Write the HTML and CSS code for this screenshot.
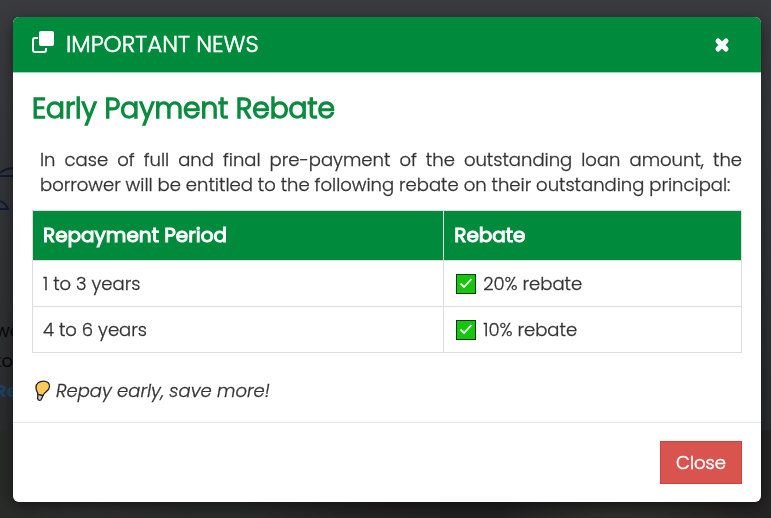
FILE: index.html
```html
<!DOCTYPE html>
<html lang="en">
<head>
  <meta charset="UTF-8"/>
  <meta name="viewport" content="width=device-width, initial-scale=1.0"/>
  <title>Important News</title>
  <link rel="stylesheet" href="styles.css">
</head>
<body>
<main class="page">
  <svg class="page-art" width="40" height="56" viewBox="0 0 40 56" fill="none" stroke="#111b30" stroke-width="2">
    <path d="M0 9C4 5 9 4 20 4M0 12H20M0 37C4 39 7 42 8 45H0"/>
  </svg>
  <p class="page-text">we<br>to<br><a href="#">Re</a></p>
  <div class="page-photo"></div>
</main>

<div class="modal-backdrop">
  <div class="modal" role="dialog" aria-labelledby="modalTitle">
    <div class="modal-header">
      <svg class="title-icon" width="24" height="24" viewBox="0 0 24 24">
        <path d="M7 8H4Q2 8 2 10V20Q2 22 4 22H13Q15 22 15 20V18" fill="none" stroke="#fff" stroke-width="2"/>
        <rect x="8" y="1" width="15" height="15" rx="2" fill="#fff"/>
      </svg>
      <h4 id="modalTitle" class="modal-title">IMPORTANT NEWS</h4>
      <button type="button" class="close-icon" aria-label="Close" onclick="closeModal()">
        <svg width="16" height="16" viewBox="0 0 16 16">
          <path d="M4 4L12 12M12 4L4 12" stroke="#fff" stroke-width="5" stroke-linecap="round"/>
        </svg>
      </button>
    </div>

    <div class="modal-body">
      <h2>Early Payment Rebate</h2>
      <p class="intro">In case of full and final pre-payment of the outstanding loan amount, the borrower will be entitled to the following rebate on their outstanding principal:</p>

      <table>
        <thead>
        <tr>
          <th>Repayment Period</th>
          <th>Rebate</th>
        </tr>
        </thead>
        <tbody>
        <tr>
          <td>1 to 3 years</td>
          <td>
            <svg class="check" width="20" height="20" viewBox="0 0 20 20">
              <rect x="0.500" y="0.500" width="19" height="19" fill="#16c60c" stroke="#10380d"/>
              <path d="M4.500 9.500L8 13L15.500 5" fill="none" stroke="#fff" stroke-width="1.800"/>
            </svg>
            20% rebate
          </td>
        </tr>
        <tr>
          <td>4 to 6 years</td>
          <td>
            <svg class="check" width="20" height="20" viewBox="0 0 20 20">
              <rect x="0.500" y="0.500" width="19" height="19" fill="#16c60c" stroke="#10380d"/>
              <path d="M4.500 9.500L8 13L15.500 5" fill="none" stroke="#fff" stroke-width="1.800"/>
            </svg>
            10% rebate
          </td>
        </tr>
        </tbody>
      </table>

      <p class="note">
        <svg class="bulb" width="16" height="22" viewBox="0 0 16 22">
          <path d="M3 14L2.500 18.500Q3.500 21 6 20L8 15.500Z" fill="#ccc" stroke="#222" stroke-width="1.300"/>
          <path d="M3 14.500C2.500 11.500 1 11 1 7.500C1 3.500 4.500 1.200 8.500 1.200C12.500 1.200 15 3.600 14.500 7C14 11 9.500 12 8 15.500Z" fill="#ffc95c" stroke="#222" stroke-width="1.300"/>
        </svg>
        <em>Repay early, save more!</em>
      </p>
    </div>

    <div class="modal-footer">
      <button type="button" class="btn-close" onclick="closeModal()">Close</button>
    </div>
  </div>
</div>

<script>
  function closeModal() {
    document.querySelector('.modal-backdrop').style.display = 'none';
  }
</script>
</body>
</html>
```

FILE: styles.css
```css
body {
  background-color: #333538;
  font-family: 'Poppins', 'Inter', 'Liberation Sans', sans-serif;
  font-size: 18px;
  font-weight: 300;
  line-height: 25px;
  color: #333;
  margin: 0;
  padding: 0;
}

.page {
  box-sizing: border-box;
  min-height: 100vh;
  padding-top: 164px;
  background: linear-gradient(#393b3f, #303235 50%, #292b2c 85%);
  display: flex;
  flex-direction: column;
}

.page-text {
  margin: 96px 0 24px -5px;
  font-weight: 400;
  line-height: 30px;
  color: #080808;
}

.page-text a {
  color: #204262;
  font-weight: 700;
  text-decoration: none;
}

.page-photo {
  flex: 1;
  background:
    radial-gradient(ellipse at 12% 90%, #303130, transparent 12%),
    radial-gradient(ellipse at 80% 95%, #30302f, transparent 14%),
    linear-gradient(90deg, #292b29, #2c2d2d 30%, #252324 50%, #222 65%, #2b2a29 85%, #262424);
}

.modal-backdrop {
  position: fixed;
  inset: 0;
  padding: 17px 10px 15px 13px;
  overflow: auto;
}

.modal {
  background: #fff;
  border-radius: 6px;
  box-shadow: 0 5px 15px rgba(0,0,0,0.5);
  overflow: hidden;
  -webkit-text-stroke: 0.3px;
}

.modal-header {
  display: flex;
  align-items: center;
  gap: 11px;
  height: 55px;
  padding: 0 30px 0 18px;
  background-color: #008b3c;
  border-bottom: 1px solid #a5d3b6;
}

.title-icon {
  margin-bottom: 6px;
}

.modal-title {
  flex: 1;
  margin: 0;
  font-size: 23px;
  font-weight: 300;
  -webkit-text-stroke: 0.5px;
  color: #fff;
}

.close-icon {
  display: flex;
  padding: 1px;
  border: none;
  background: none;
  cursor: pointer;
}

.modal-body {
  padding: 19px;
}

h2 {
  margin: 0 0 22px;
  font-size: 28px;
  line-height: 33px;
  font-weight: 300;
  -webkit-text-stroke: 1.4px;
  color: #0b8b3f;
}

.intro {
  margin: 0 0 13px;
  padding-left: 8px;
  text-align: justify;
}

table {
  width: 100%;
  border-collapse: collapse;
}

th, td {
  padding: 10px;
  border: 1px solid #ddd;
  text-align: left;
}

th:nth-child(1) { width: 58%; }
th:nth-child(2) { width: 42%; }

th {
  padding: 12px 10px;
  font-size: 20px;
  font-weight: 400;
  -webkit-text-stroke: 1px;
  color: #fff;
  background-color: #008b3c;
}

.check {
  margin: 0 2px;
  vertical-align: -4px;
}

.note {
  margin: 25px 0 0;
  padding-left: 3px;
}

.bulb {
  vertical-align: -5px;
}

.modal-footer {
  padding: 18px 19px;
  border-top: 1px solid #e5e5e5;
  text-align: right;
}

.btn-close {
  padding: 8px 15px;
  border: 1px solid #d43f3a;
  background-color: #d9534f;
  color: #fff;
  font-family: inherit;
  font-size: 18px;
  font-weight: 300;
  line-height: 25px;
  -webkit-text-stroke: 0.5px;
  cursor: pointer;
}

.btn-close:hover {
  background-color: #c9302c;
}
```
